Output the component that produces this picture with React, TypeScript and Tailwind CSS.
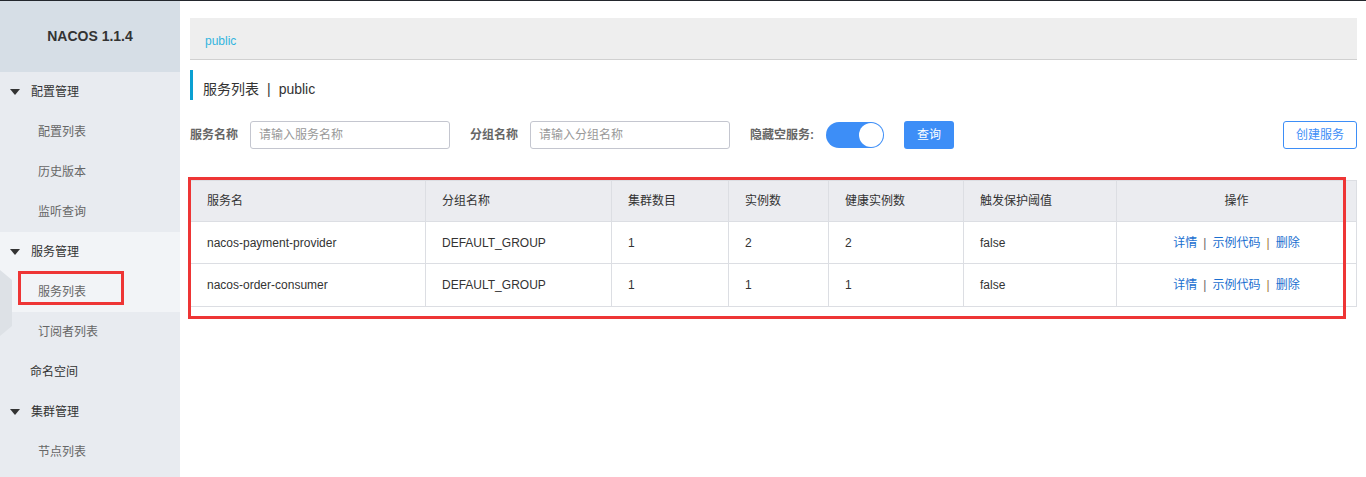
import React from "react";

const font = { fontFamily: '"Liberation Sans", "Noto Sans CJK SC", sans-serif' };

function Caret() {
  return (
    <svg width="10" height="6" viewBox="0 0 10 6" className="mr-[11px]">
      <path d="M0 0 L10 0 L5 6 Z" fill="#333" />
    </svg>
  );
}

function GroupItem({ label, caret = true, light = false }: { label: string; caret?: boolean; light?: boolean }) {
  return (
    <div className={`h-[40px] flex items-center pl-[10px] text-[12px] text-[#333] ${light ? "bg-[#f2f4f7]" : ""}`}>
      {caret ? <Caret /> : <span className="w-[20px]" />}
      <span>{label}</span>
    </div>
  );
}

function SubItem({ label, light = false, boxed = false }: { label: string; light?: boolean; boxed?: boolean }) {
  return (
    <div className={`relative h-[40px] flex items-center pl-[38px] text-[12px] text-[#666] ${light ? "bg-[#f2f4f7]" : ""}`}>
      <span>{label}</span>
      {boxed && (
        <div className="absolute left-[18px] top-[-1px] w-[106px] h-[34px] border-[3px] border-[#ee3535]" />
      )}
    </div>
  );
}

const cols = [236, 186, 117, 100, 135, 153, 239];
const headers = ["服务名", "分组名称", "集群数目", "实例数", "健康实例数", "触发保护阈值", "操作"];
const rows = [
  ["nacos-payment-provider", "DEFAULT_GROUP", "1", "2", "2", "false"],
  ["nacos-order-consumer", "DEFAULT_GROUP", "1", "1", "1", "false"],
];

export default function App() {
  return (
    <div className="w-[1366px] h-[477px] overflow-hidden bg-white flex flex-col" style={font}>
      <div className="h-[1px] bg-[#23272d] shrink-0" />
      <div className="flex flex-1 min-h-0">
        {/* Sidebar */}
        <div className="relative w-[180px] shrink-0 bg-[#e8ebf0]">
          <div className="h-[71px] bg-[#d6dee6] flex items-center justify-center pb-[1px] text-[14px] font-bold text-[#333]">
            NACOS 1.1.4
          </div>
          <GroupItem label="配置管理" />
          <SubItem label="配置列表" />
          <SubItem label="历史版本" />
          <SubItem label="监听查询" />
          <GroupItem label="服务管理" light />
          <SubItem label="服务列表" light boxed />
          <SubItem label="订阅者列表" />
          <GroupItem label="命名空间" caret={false} />
          <GroupItem label="集群管理" />
          <SubItem label="节点列表" />
          <svg className="absolute left-0 top-[269px]" width="13" height="66" viewBox="0 0 13 66">
            <path d="M0 0 L12 10 L12 56 L0 66 Z" fill="#dde1e6" />
          </svg>
        </div>

        {/* Main */}
        <div className="flex-1 px-[10px] pt-[17px]">
          <div className="h-[42px] bg-[#eeeeee] border-b border-[#d0d0d0] flex items-center pl-[15px] pt-[5px] text-[12px] text-[#33b5de]">
            public
          </div>
          <div className="mt-[10px] h-[30px] border-l-[3px] border-[#0aa0d2] pl-[10px] flex items-end pb-[1px] text-[14px] leading-[20px] text-[#333]">
            服务列表<span className="mx-[8px]">|</span>public
          </div>

          <div className="mt-[21px] h-[28px] flex items-center text-[12px]">
            <span className="font-bold text-[#666] w-[60px]">服务名称</span>
            <div className="w-[200px] h-[28px] border border-[#c4c6cf] rounded-[3px] flex items-center pl-[8px] text-[#999]">
              请输入服务名称
            </div>
            <span className="ml-[20px] font-bold text-[#666] w-[60px]">分组名称</span>
            <div className="w-[200px] h-[28px] border border-[#c4c6cf] rounded-[3px] flex items-center pl-[8px] text-[#999]">
              请输入分组名称
            </div>
            <span className="ml-[20px] font-bold text-[#666] w-[65px]">隐藏空服务:</span>
            <div className="ml-[11px] w-[58px] h-[26px] rounded-full bg-[#3d8ef7] relative">
              <div className="absolute right-[1px] top-[1px] w-[24px] h-[24px] rounded-full bg-white" />
            </div>
            <div className="ml-[20px] w-[50px] h-[28px] rounded-[3px] bg-[#3d8ef7] text-white flex items-center justify-center">
              查询
            </div>
            <div className="flex-1" />
            <div className="w-[74px] h-[28px] rounded-[3px] border border-[#3d8ef7] text-[#3d8ef7] bg-white flex items-center justify-center">
              创建服务
            </div>
          </div>

          <div className="relative mt-[31px]">
            <div className="border border-[#dcdee3] text-[12px] text-[#333]">
              <div className="flex h-[41px] bg-[#ebecf0] border-b border-[#dcdee3]">
                {headers.map((h, i) => (
                  <div
                    key={h}
                    style={{ width: cols[i] - (i === 0 ? 1 : 0) }}
                    className={`flex items-center shrink-0 ${i < 6 ? "border-r border-[#dcdee3] pl-[16px]" : "justify-center"}`}
                  >
                    {h}
                  </div>
                ))}
              </div>
              {rows.map((r, ri) => (
                <div key={ri} className={`flex h-[42px] ${ri === 0 ? "border-b border-[#dcdee3]" : ""}`}>
                  {r.map((c, i) => (
                    <div
                      key={i}
                      style={{ width: cols[i] - (i === 0 ? 1 : 0) }}
                      className="flex items-center shrink-0 border-r border-[#dcdee3] pl-[16px]"
                    >
                      {c}
                    </div>
                  ))}
                  <div className="flex-1 flex items-center justify-center text-[#1a6fd0]">
                    <span>详情</span>
                    <span className="mx-[6px] text-[#666]">|</span>
                    <span>示例代码</span>
                    <span className="mx-[6px] text-[#a0783c]">|</span>
                    <span>删除</span>
                  </div>
                </div>
              ))}
            </div>
            <div className="absolute left-[-2px] top-[-3px] w-[1158px] h-[142px] border-[3px] border-[#ee3535] pointer-events-none" />
          </div>
        </div>
      </div>
    </div>
  );
}
